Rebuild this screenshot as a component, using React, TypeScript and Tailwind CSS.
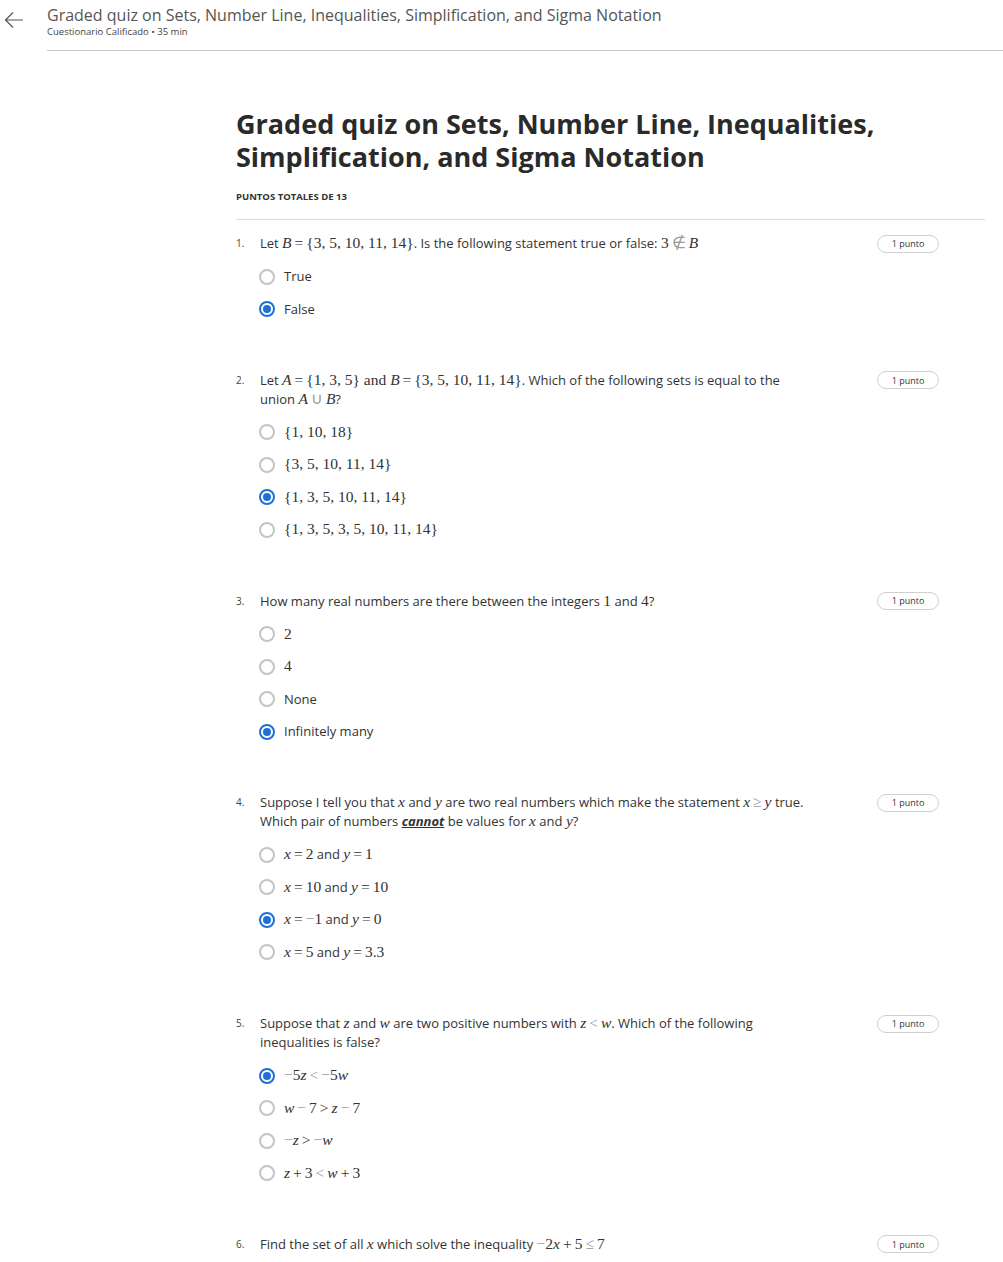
import React from "react";

const M = ({ children }: { children: React.ReactNode }) => (
  <span className="font-['Liberation_Serif',serif] text-[15.5px] leading-none text-[#333]">{children}</span>
);
const V = ({ children }: { children: React.ReactNode }) => <i className="italic">{children}</i>;
const R = ({ children, gray }: { children: React.ReactNode; gray?: boolean }) => (
  <span className={"mx-[3px] " + (gray ? "text-[#999]" : "")}>{children}</span>
);
const G = ({ children }: { children: React.ReactNode }) => <span className="text-[#999]">{children}</span>;

type Opt = { label: React.ReactNode; selected?: boolean };

const Radio = ({ selected }: { selected?: boolean }) =>
  selected ? (
    <span className="w-[16px] h-[16px] rounded-full border-2 border-[#1f6fd6] flex items-center justify-center shrink-0">
      <span className="w-[8px] h-[8px] rounded-full bg-[#1f6fd6]" />
    </span>
  ) : (
    <span className="w-[16px] h-[16px] rounded-full border-2 border-[#c4c4c4] shrink-0" />
  );

const Question = ({
  n,
  text,
  options,
  first,
}: {
  n: number;
  text: React.ReactNode;
  options: Opt[];
  first?: boolean;
}) => (
  <div className={first ? "mt-[14px]" : "mt-[45.5px]"}>
    <div className="flex items-start">
      <div className="w-[24px] text-[10px] leading-[19px] text-[#444]">{n}.</div>
      <div className="flex-1 text-[13px] leading-[19px] text-[#333]">{text}</div>
      <div className="mr-[46px] ml-4 w-[62px] h-[18px] rounded-full border border-[#d0d0d0] flex items-center justify-center text-[9px] text-[#333] mt-[0.5px]">
        1 punto
      </div>
    </div>
    {options.length > 0 && (
      <div className="mt-[7.25px] ml-[23px]">
        {options.map((o, i) => (
          <div key={i} className="h-[32.5px] flex items-center gap-[9px]">
            <Radio selected={o.selected} />
            <div className="text-[13px] leading-[19px] text-[#333]">{o.label}</div>
          </div>
        ))}
      </div>
    )}
  </div>
);

export default function App() {
  return (
    <div className="min-h-[1262px] bg-white font-['Open_Sans',sans-serif] text-[#333]">
      {/* header */}
      <div className="flex">
        <div className="w-[47px] pt-[10px] pl-[4px]">
          <svg width="20" height="20" viewBox="0 0 20 20" fill="none" stroke="#555" strokeWidth="1.2">
            <path d="M19 10H1.5M9 2.5L1.5 10L9 17.5" />
          </svg>
        </div>
        <div className="flex-1">
          <div className="h-[51px] border-b border-[#c8c8c8] pt-[4px]">
            <div className="text-[16px] leading-[22px] text-[#555] font-normal">
              Graded quiz on Sets, Number Line, Inequalities, Simplification, and Sigma Notation
            </div>
            <div className="text-[9.5px] leading-[12px] text-[#444]">Cuestionario Calificado • 35 min</div>
          </div>
        </div>
      </div>

      <div className="ml-[236px] mr-[18px] pt-[56px]">
        <h1 className="text-[27px] leading-[33px] font-bold text-[#2a2a2a]">
          Graded quiz on Sets, Number Line, Inequalities,
          <br />
          Simplification, and Sigma Notation
        </h1>
        <div className="mt-[18px] text-[9.5px] leading-[12px] font-bold text-[#333] uppercase">Puntos totales de 13</div>
        <div className="mt-[16px] border-b border-[#dcdcdc]" />

        <Question
          first
          n={1}
          text={
            <>
              Let <M><V>B</V><R>=</R>{"{"}3, 5, 10, 11, 14{"}"}</M>. Is the following statement true or false:{" "}
              <M>
                3<R gray>∉</R><V>B</V>
              </M>
            </>
          }
          options={[{ label: "True" }, { label: "False", selected: true }]}
        />

        <Question
          n={2}
          text={
            <>
              Let <M><V>A</V><R>=</R>{"{"}1, 3, 5{"}"} and <V>B</V><R>=</R>{"{"}3, 5, 10, 11, 14{"}"}</M>. Which of the following sets is equal to the
              <br />
              union{" "}
              <M>
                <V>A</V><R gray>∪</R><V>B</V>
              </M>
              ?
            </>
          }
          options={[
            { label: <M>{"{"}1, 10, 18{"}"}</M> },
            { label: <M>{"{"}3, 5, 10, 11, 14{"}"}</M> },
            { label: <M>{"{"}1, 3, 5, 10, 11, 14{"}"}</M>, selected: true },
            { label: <M>{"{"}1, 3, 5, 3, 5, 10, 11, 14{"}"}</M> },
          ]}
        />

        <Question
          n={3}
          text={
            <>
              How many real numbers are there between the integers <M>1</M> and <M>4</M>?
            </>
          }
          options={[
            { label: <M>2</M> },
            { label: <M>4</M> },
            { label: "None" },
            { label: "Infinitely many", selected: true },
          ]}
        />

        <Question
          n={4}
          text={
            <>
              Suppose I tell you that <M><V>x</V></M> and <M><V>y</V></M> are two real numbers which make the statement{" "}
              <M>
                <V>x</V><R gray>≥</R><V>y</V>
              </M>{" "}
              true.
              <br />
              Which pair of numbers <b className="italic underline font-bold">cannot</b> be values for <M><V>x</V></M> and{" "}
              <M><V>y</V></M>?
            </>
          }
          options={[
            { label: <><M><V>x</V><R>=</R>2</M> and <M><V>y</V><R>=</R>1</M></> },
            { label: <><M><V>x</V><R>=</R>10</M> and <M><V>y</V><R>=</R>10</M></> },
            { label: <><M><V>x</V><R>=</R><G>−</G>1</M> and <M><V>y</V><R>=</R>0</M></>, selected: true },
            { label: <><M><V>x</V><R>=</R>5</M> and <M><V>y</V><R>=</R>3.3</M></> },
          ]}
        />

        <Question
          n={5}
          text={
            <>
              Suppose that <M><V>z</V></M> and <M><V>w</V></M> are two positive numbers with{" "}
              <M>
                <V>z</V><R gray>&lt;</R><V>w</V>
              </M>
              . Which of the following
              <br />
              inequalities is false?
            </>
          }
          options={[
            { label: <M><G>−</G>5<V>z</V><R gray>&lt;</R><G>−</G>5<V>w</V></M>, selected: true },
            { label: <M><V>w</V><R gray>−</R>7<R>&gt;</R><V>z</V><R gray>−</R>7</M> },
            { label: <M><G>−</G><V>z</V><R>&gt;</R><G>−</G><V>w</V></M> },
            { label: <M><V>z</V><R>+</R>3<R gray>&lt;</R><V>w</V><R>+</R>3</M> },
          ]}
        />

        <Question
          n={6}
          text={
            <>
              Find the set of all <M><V>x</V></M> which solve the inequality{" "}
              <M>
                <G>−</G>2<V>x</V><R>+</R>5<R gray>≤</R>7
              </M>
            </>
          }
          options={[]}
        />
      </div>
    </div>
  );
}
